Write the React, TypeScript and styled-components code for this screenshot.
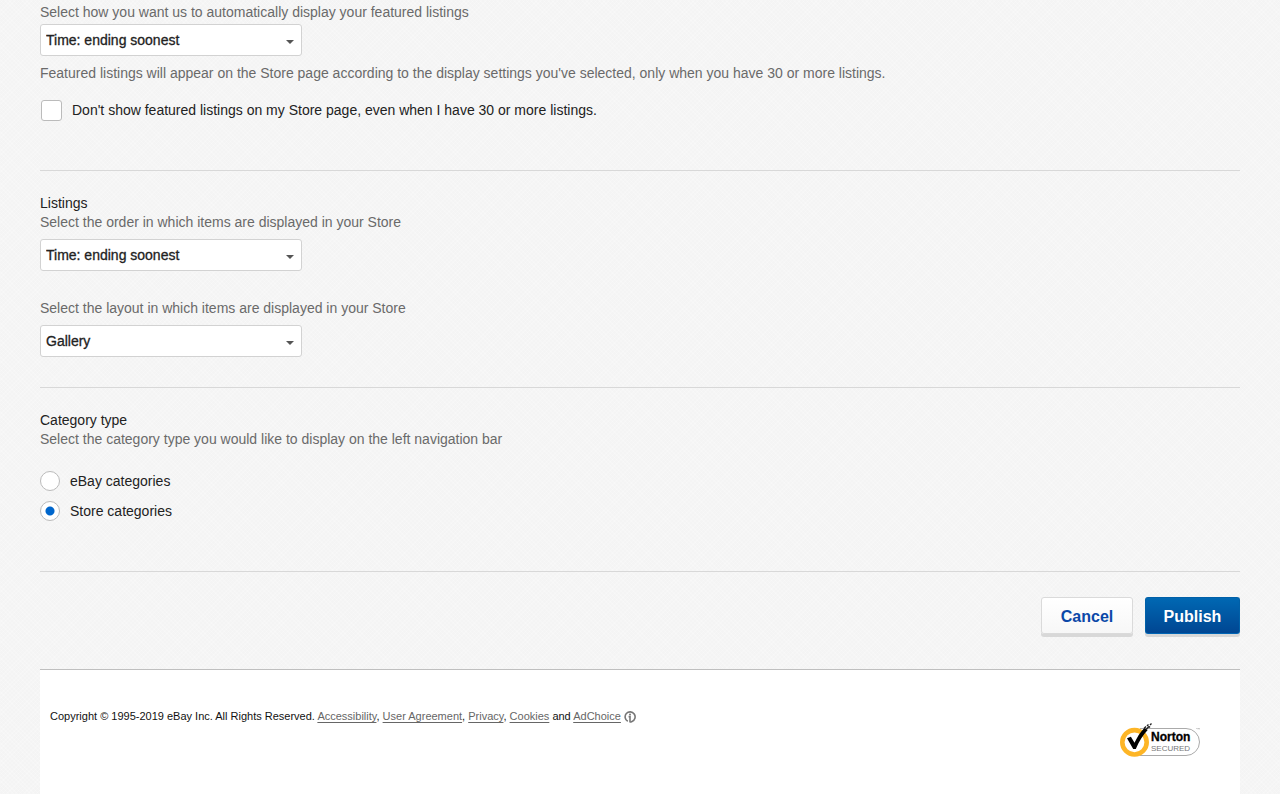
import React from "react";
import styled, { createGlobalStyle } from "styled-components";

const GlobalStyle = createGlobalStyle`
  *, *::before, *::after { box-sizing: border-box; }
  body {
    margin: 0;
    font-family: "Liberation Sans", Arial, Helvetica, sans-serif;
    font-size: 14px;
    line-height: 19px;
    color: #222;
    background-color: #f4f4f4;
    background-image:
      repeating-linear-gradient(45deg, rgba(255, 255, 255, 0.2) 0 1px, transparent 1px 3px),
      repeating-linear-gradient(-45deg, rgba(255, 255, 255, 0.2) 0 1px, transparent 1px 3px);
  }
`;

const Page = styled.div`
  display: flex;
  flex-direction: column;
  min-height: 100vh;
  padding: 0 40px;
`;

const Form = styled.form`
  display: flex;
  flex-direction: column;
`;

const Section = styled.section<{ $top: number; $bottom: number }>`
  display: flex;
  flex-direction: column;
  align-items: flex-start;
  padding-top: ${(p) => p.$top}px;
  padding-bottom: ${(p) => p.$bottom}px;
  border-bottom: 1px solid #d8d8d8;
`;

const Title = styled.h2`
  margin: 0;
  font-size: 14px;
  font-weight: 400;
`;

const Field = styled.div<{ $gap: number }>`
  display: flex;
  flex-direction: column;
  align-items: flex-start;
  gap: ${(p) => p.$gap}px;

  & + & {
    margin-top: 28px;
  }
`;

const Hint = styled.label`
  color: #6a6a6a;
`;

const Note = styled.p`
  margin: 0;
  padding-top: 8px;
  color: #6a6a6a;
`;

const SelectWrap = styled.div`
  display: grid;
  width: 262px;
  max-width: 100%;
  align-items: center;

  & > * {
    grid-area: 1 / 1;
  }
`;

const SelectBox = styled.select`
  appearance: none;
  width: 100%;
  height: 32px;
  padding: 0 28px 0 5px;
  border: 1px solid #d2d2d2;
  border-radius: 3px;
  background: #fff;
  color: #222;
  font: inherit;
  -webkit-text-stroke: 0.3px #222;
`;

const Caret = styled.svg`
  justify-self: end;
  width: 8px;
  height: 4px;
  margin: 3px 8px 0 0;
  pointer-events: none;
`;

const Choice = styled.label`
  display: flex;
  align-items: center;
  gap: 10px;
`;

const Checkbox = styled.input`
  appearance: none;
  flex: none;
  width: 21px;
  height: 21px;
  margin: 0 0 0 1px;
  border: 1px solid #bbb;
  border-radius: 3px;
  background: #fff;

  &:checked {
    background: #fff radial-gradient(circle, #0066cc 4px, #fff 5px);
  }
`;

const ChoiceRow = styled.div`
  padding-top: 17px;
`;

const Radio = styled.input`
  appearance: none;
  flex: none;
  width: 20px;
  height: 20px;
  margin: 0;
  border: 1px solid #bbb;
  border-radius: 50%;
  background: #fff;

  &:checked {
    background: radial-gradient(circle, #0066cc 3px, #0066cc 4px, #fff 5px);
  }
`;

const RadioGroup = styled.div`
  display: flex;
  flex-direction: column;
  gap: 10px;
  padding-top: 22px;
`;

const Actions = styled.div`
  display: flex;
  justify-content: flex-end;
  gap: 12px;
  padding: 25px 0 35px;
`;

const Button = styled.button<{ $primary?: boolean }>`
  height: 37px;
  width: ${(p) => (p.$primary ? 95 : 92)}px;
  padding: 2px 0 0;
  border: 1px solid ${(p) => (p.$primary ? "#0060a8" : "#dadada")};
  border-bottom-color: ${(p) => (p.$primary ? "#0065b5" : "#dadada")};
  border-radius: 3px;
  background: ${(p) =>
    p.$primary
      ? "linear-gradient(#0068b3, #004692)"
      : "linear-gradient(#fff, #f7f7f7)"};
  box-shadow: 0 3px 0 #d8d8d8;
  color: ${(p) => (p.$primary ? "#fff" : "#0b48a8")};
  font: bold 16px/19px "Liberation Sans", Arial, Helvetica, sans-serif;
`;

const Footer = styled.footer`
  display: flex;
  flex: 1;
  align-items: flex-start;
  justify-content: space-between;
  min-height: 125px;
  padding: 37px 40px 32px 10px;
  border-top: 1px solid #bfbfbf;
  background: #fff;
`;

const Legal = styled.p`
  display: flex;
  flex-wrap: wrap;
  align-items: center;
  margin: 0;
  font-size: 11px;
  line-height: 19px;
  color: #111;
`;

const LegalLink = styled.a`
  color: #666;
  text-decoration: underline;
  text-underline-offset: 2px;
`;

const AdIcon = styled.svg`
  width: 12px;
  height: 12px;
  margin-left: 3px;
`;

const Seal = styled.svg`
  flex: none;
  width: 80px;
  height: 34px;
  margin-top: 16px;
`;

function Select({ id, options }: { id: string; options: string[] }) {
  return (
    <SelectWrap>
      <SelectBox id={id}>
        {options.map((o) => (
          <option key={o}>{o}</option>
        ))}
      </SelectBox>
      <Caret viewBox="0 0 8 4" aria-hidden="true">
        <path d="M0 0h8L4 4z" fill="#555" />
      </Caret>
    </SelectWrap>
  );
}

function NortonSeal() {
  return (
    <Seal viewBox="0 0 80 34" role="img" aria-label="Norton Secured">
      <path d="M20 5.5H66a13.4 13.4 0 0 1 0 27H20" fill="#fff" stroke="#aaa" />
      <circle cx="14.5" cy="19.3" r="12.2" fill="#fff" stroke="#fdb526" strokeWidth="4.6" />
      <path
        d="M7 15.2l3.9-1.4 3.6 6C17 14.5 20 9.5 24.3 5l3.4 2C23 12 19 18.5 15.8 26h-2.6z"
        fill="#000"
      />
      <path
        d="M24 5.5l2-2M26 6.5l3-3M27 3l1.5-1.5M29 4.5l1-1M30 2l1.5-1.5"
        stroke="#222"
        strokeWidth="1.4"
      />
      <text
        x="31"
        y="18"
        fontFamily="Liberation Sans, Arial, sans-serif"
        fontSize="12"
        fontWeight="700"
        fill="#000"
        stroke="#000"
        strokeWidth=".3"
      >
        Norton
      </text>
      <text x="31" y="28" fontFamily="Liberation Sans, Arial, sans-serif" fontSize="8" fill="#777">
        SECURED
      </text>
      <path d="M76 5.5h1.5M78 6.5V5l.7 1 .7-1v1.5" fill="none" stroke="#aaa" strokeWidth=".5" />
    </Seal>
  );
}

export default function App() {
  return (
    <>
      <GlobalStyle />
      <Page>
        <Form onSubmit={(e) => e.preventDefault()}>
          <Section $top={3} $bottom={49}>
            <Field $gap={2}>
              <Hint htmlFor="featured">
                Select how you want us to automatically display your featured listings
              </Hint>
              <Select id="featured" options={["Time: ending soonest", "Time: newly listed"]} />
            </Field>
            <Note>
              Featured listings will appear on the Store page according to the display settings
              you've selected, only when you have 30 or more listings.
            </Note>
            <ChoiceRow>
              <Choice>
                <Checkbox type="checkbox" />
                Don't show featured listings on my Store page, even when I have 30 or more listings.
              </Choice>
            </ChoiceRow>
          </Section>

          <Section $top={23} $bottom={30}>
            <Title>Listings</Title>
            <Field $gap={7}>
              <Hint htmlFor="order">Select the order in which items are displayed in your Store</Hint>
              <Select id="order" options={["Time: ending soonest", "Time: newly listed"]} />
            </Field>
            <Field $gap={7}>
              <Hint htmlFor="layout">Select the layout in which items are displayed in your Store</Hint>
              <Select id="layout" options={["Gallery", "List"]} />
            </Field>
          </Section>

          <Section $top={23} $bottom={50}>
            <Title>Category type</Title>
            <Hint as="span">
              Select the category type you would like to display on the left navigation bar
            </Hint>
            <RadioGroup role="radiogroup" aria-label="Category type">
              <Choice>
                <Radio type="radio" name="category" />
                eBay categories
              </Choice>
              <Choice>
                <Radio type="radio" name="category" defaultChecked />
                Store categories
              </Choice>
            </RadioGroup>
          </Section>

          <Actions>
            <Button type="button">Cancel</Button>
            <Button type="submit" $primary>
              Publish
            </Button>
          </Actions>
        </Form>

        <Footer>
          <Legal>
            <span>
              Copyright © 1995-2019 eBay Inc. All Rights Reserved.{" "}
              <LegalLink href="#accessibility">Accessibility</LegalLink>,{" "}
              <LegalLink href="#agreement">User Agreement</LegalLink>,{" "}
              <LegalLink href="#privacy">Privacy</LegalLink>,{" "}
              <LegalLink href="#cookies">Cookies</LegalLink> and{" "}
              <LegalLink href="#adchoice">AdChoice</LegalLink>
            </span>
            <AdIcon viewBox="0 0 12 12" aria-hidden="true">
              <path
                d="M3.8 10.3A5 5 0 1 1 8 10.5L6.3 11.2"
                fill="none"
                stroke="#777"
                strokeWidth="1.6"
              />
              <circle cx="6" cy="3.5" r="1" fill="#777" />
              <path d="M4.6 5.6H6V11.5" fill="none" stroke="#777" strokeWidth="1.6" />
            </AdIcon>
          </Legal>
          <NortonSeal />
        </Footer>
      </Page>
    </>
  );
}
